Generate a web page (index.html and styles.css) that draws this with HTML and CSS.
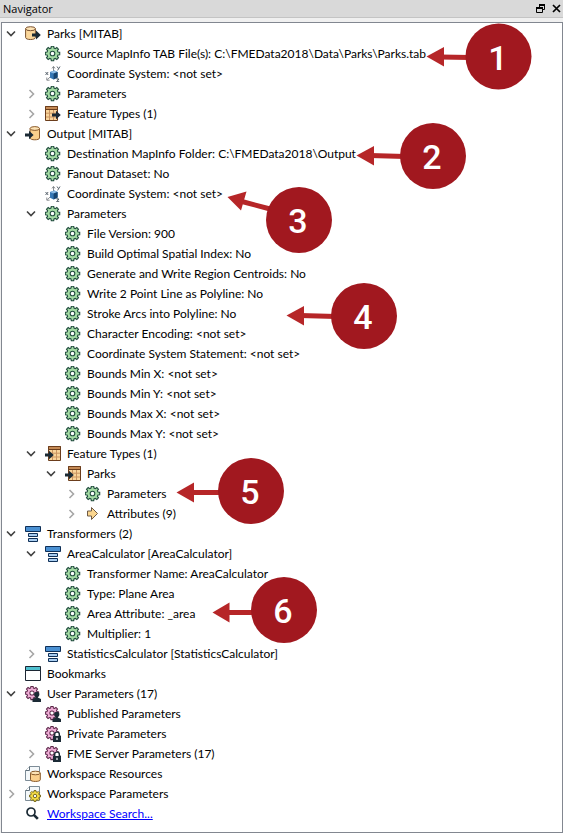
FILE: index.html
```html
<!DOCTYPE html>
<html lang="en">
<head>
<meta charset="utf-8">
<title>Navigator</title>
<link rel="stylesheet" href="styles.css">
</head>
<body>
<svg class="sprite" aria-hidden="true">
  <defs>
    <g id="cog">
      <path fill-rule="evenodd" d="M-1.5-5.4L-1.2-7.2H1.2L1.5-5.4L2.8-4.9L4.3-6L6-4.3L4.9-2.8L5.4-1.5L7.2-1.2V1.2L5.4 1.5L4.9 2.8L6 4.3L4.3 6L2.8 4.9L1.5 5.4L1.2 7.2H-1.2L-1.5 5.4L-2.8 4.9L-4.3 6L-6 4.3L-4.9 2.8L-5.4 1.5L-7.2 1.2V-1.2L-5.4-1.5L-4.9-2.8L-6-4.3L-4.3-6L-2.8-4.9ZM2.3 0A2.3 2.3 0 1 0-2.3 0A2.3 2.3 0 1 0 2.3 0Z"/>
    </g>
    <symbol id="gear" viewBox="0 0 16 16">
      <use href="#cog" transform="translate(7.5 7.5)" fill="#a4dba4" stroke="#1f4a3c" stroke-width="1.1"/>
    </symbol>
    <symbol id="down" viewBox="0 0 10 10"><path d="M1 2.500L5 6.500L9 2.500" fill="none" stroke="#404040" stroke-width="1.6"/></symbol>
    <symbol id="right" viewBox="0 0 10 10"><path d="M3.500 1L7.500 5L3.500 9" fill="none" stroke="#a6a6a6" stroke-width="1.6"/></symbol>
    <symbol id="reader" viewBox="0 0 16 16">
      <path d="M.6 2.5V11.5C.6 14.2 10.4 14.2 10.4 11.5V2.5" fill="#fbd79b" stroke="#7a5230"/>
      <ellipse cx="5.5" cy="2.7" rx="4.9" ry="2" fill="#fde3b5" stroke="#7a5230"/>
      <path d="M7 7.4H11V4.6L15.8 9L11 13.4V10.6H7Z" fill="#1b2a35"/>
    </symbol>
    <symbol id="writer" viewBox="0 0 16 16">
      <path d="M5.1 2.5V12C5.1 14.4 14.5 14.4 14.5 12V2.5" fill="#fbd08c" stroke="#8a5a2b"/>
      <ellipse cx="9.8" cy="2.5" rx="4.7" ry="1.9" fill="#fde3b5" stroke="#8a5a2b"/>
      <path d="M0 7.4H4V4.8L8.6 9L4 13.2V10.6H0Z" fill="#1b2a35"/>
    </symbol>
    <symbol id="axes" viewBox="0 0 16 16">
      <path d="M8.5 1V6M6 10L2.5 13.6M10 11L14 14" stroke="#8a8f94" fill="none"/>
      <path d="M7 2.4L8.5.4L10 2.4M1.8 11.5V14.2H4.6" fill="none" stroke="#6a6f74" stroke-width=".8"/>
      <path d="M5 6L9.5 4.4L12.6 6V11.5L8.6 13.6L5 11.8Z" fill="#3677b5"/>
      <path d="M5 6L9.5 4.4L12.6 6L8.6 7.4Z" fill="#8dbbe4"/>
      <path d="M8.6 7.4L12.6 6V11.5L8.6 13.6Z" fill="#16436f"/>
      <path d="M.5 6L3.2 9M3.2 6L.5 9M12 .5L13.4 2.5M15 .5L12.6 4.4M11.6 13H14L11.6 15.6H14.2" fill="none" stroke="#46525e" stroke-width=".9"/>
    </symbol>
    <symbol id="table-out" viewBox="0 0 16 16">
      <path d="M.5.5H12.5V14.5H.5Z" fill="#f9d49a" stroke="#6b3d1c"/>
      <path d="M1 7.2H12M1 11H12M4.5 4V14M8.5 4V14" stroke="#c99461"/>
      <path d="M.5.5H12.5V3.5H.5Z" fill="#c58a55" stroke="#6b3d1c"/>
      <path d="M7 7.4H11V4.8L15.8 9L11 13.2V10.6H7Z" fill="#1b2a35"/>
    </symbol>
    <symbol id="table-in" viewBox="0 0 16 16">
      <path d="M3.5.5H15.5V14.5H3.5Z" fill="#f9d49a" stroke="#6b3d1c"/>
      <path d="M4 7.2H15M4 11H15M7.5 4V14M11.5 4V14" stroke="#c99461"/>
      <path d="M3.5.5H15.5V3.5H3.5Z" fill="#c58a55" stroke="#6b3d1c"/>
      <path d="M0 7.4H4V4.8L8.8 9L4 13.2V10.6H0Z" fill="#1b2a35"/>
    </symbol>
    <symbol id="attribute" viewBox="0 0 16 16">
      <path d="M2.500 5H6.500V1.500L12.500 7.500L6.500 13.500V10H2.500Z" fill="#fbd68f" stroke="#6e5a45"/>
    </symbol>
    <symbol id="transformer" viewBox="0 0 16 16">
      <path d="M.5.5H15.5V5.5H.5Z" fill="#4a90d2" stroke="#0f2f57"/>
      <path d="M3.5 7.5H12.5V10.5H3.5ZM3.5 12.5H12.5V15.5H3.5Z" fill="#a9cdf0" stroke="#0f2f57"/>
    </symbol>
    <symbol id="bookmark" viewBox="0 0 16 16">
      <path d="M.5 1H15.5V14.5H.5Z" fill="#fff" stroke="#1c2633"/>
      <path d="M.5 .5H15.5V4.5H.5Z" fill="#4fc0cf" stroke="#1c2633"/>
    </symbol>
    <symbol id="gear-user" viewBox="0 0 16 16">
      <use href="#cog" transform="translate(7 7) scale(.92)" fill="#efadd6" stroke="#5b2648" stroke-width="1.1"/>
      <circle cx="11.7" cy="8.4" r="2.6" fill="#1b2a35"/>
      <path d="M10.6 10H12.8V11.5L16 13V16H7.5V13L10.6 11.5Z" fill="#1b2a35"/>
    </symbol>
    <symbol id="gear-lock" viewBox="0 0 16 16">
      <use href="#cog" transform="translate(7 7) scale(.92)" fill="#efadd6" stroke="#5b2648" stroke-width="1.1"/>
      <path d="M8 9.6H16V16H8Z" fill="#1b2a35"/>
      <path d="M9.7 10V8.2C9.7 5.4 14.3 5.4 14.3 8.2V10" fill="#fff" stroke="#1b2a35" stroke-width="1.4"/>
      <path d="M12 11.8V14" stroke="#fff" stroke-width="1.2"/>
    </symbol>
    <symbol id="resources" viewBox="0 0 16 16">
      <path d="M4.5.5H14.5V14.5H.5V4.5Z" fill="#f4f8fa" stroke="#7d8c97"/>
      <path d="M4.5.5V4.5H.5" fill="#fff" stroke="#61717d"/>
      <path d="M5.5 7V13.8C5.5 16 15.3 16 15.3 13.8V7" fill="#fbcf8c" stroke="#8a5a2b"/>
      <ellipse cx="10.4" cy="7" rx="4.9" ry="1.8" fill="#fde3b5" stroke="#8a5a2b"/>
    </symbol>
    <symbol id="settings" viewBox="0 0 16 16">
      <path d="M4.5.5H14.5V14.5H.5V4.5Z" fill="#f4f8fa" stroke="#7d8c97"/>
      <path d="M4.5.5V4.5H.5" fill="#fff" stroke="#61717d"/>
      <use href="#cog" transform="translate(10 10) scale(.76)" fill="#f5dc45" stroke="#6b5c12" stroke-width="1.2"/>
    </symbol>
    <symbol id="search" viewBox="0 0 16 16">
      <circle cx="6" cy="6" r="4" fill="none" stroke="#1b2a35" stroke-width="1.7"/>
      <path d="M8.800 8.800L12.800 12.800" stroke="#1b2a35" stroke-width="2.6"/>
    </symbol>
  </defs>
</svg>

<main class="panel">
  <header class="titlebar">
    <h1 class="title">Navigator</h1>
    <button class="tool" type="button" aria-label="Float panel">
      <svg class="tool-icon" viewBox="0 0 10 10"><path d="M3.500 3V1.500H8.500V5.500H7M.5 4.500H6.500V8.500H.5Z" fill="none" stroke="#000"/><path d="M3 1H9M0 4H7" stroke="#000" stroke-width="2"/></svg>
    </button>
    <button class="tool" type="button" aria-label="Close panel">
      <svg class="tool-icon" viewBox="0 0 10 10"><path d="M1 1L8 8M8 1L1 8" stroke="#000" stroke-width="1.700"/></svg>
    </button>
  </header>

  <section class="view">
    <ul class="tree">
      <li>
        <div class="row"><button class="toggle" type="button" aria-expanded="true" aria-label="Parks reader"><svg><use href="#down"/></svg></button><svg class="icon"><use href="#reader"/></svg><span>Parks [MITAB]</span></div>
        <ul>
          <li class="row leaf"><svg class="icon"><use href="#gear"/></svg><span>Source MapInfo TAB File(s): C:\FMEData2018\Data\Parks\Parks.tab</span></li>
          <li class="row leaf"><svg class="icon"><use href="#axes"/></svg><span>Coordinate System: &lt;not set&gt;</span></li>
          <li class="row"><button class="toggle" type="button" aria-expanded="false" aria-label="Parameters"><svg><use href="#right"/></svg></button><svg class="icon"><use href="#gear"/></svg><span>Parameters</span></li>
          <li class="row"><button class="toggle" type="button" aria-expanded="false" aria-label="Feature Types"><svg><use href="#right"/></svg></button><svg class="icon"><use href="#table-out"/></svg><span>Feature Types (1)</span></li>
        </ul>
      </li>
      <li>
        <div class="row"><button class="toggle" type="button" aria-expanded="true" aria-label="Output writer"><svg><use href="#down"/></svg></button><svg class="icon"><use href="#writer"/></svg><span>Output [MITAB]</span></div>
        <ul>
          <li class="row leaf"><svg class="icon"><use href="#gear"/></svg><span>Destination MapInfo Folder: C:\FMEData2018\Output</span></li>
          <li class="row leaf"><svg class="icon"><use href="#gear"/></svg><span>Fanout Dataset: No</span></li>
          <li class="row leaf"><svg class="icon"><use href="#axes"/></svg><span>Coordinate System: &lt;not set&gt;</span></li>
          <li>
            <div class="row"><button class="toggle" type="button" aria-expanded="true" aria-label="Parameters"><svg><use href="#down"/></svg></button><svg class="icon"><use href="#gear"/></svg><span>Parameters</span></div>
            <ul>
              <li class="row leaf"><svg class="icon"><use href="#gear"/></svg><span>File Version: 900</span></li>
              <li class="row leaf"><svg class="icon"><use href="#gear"/></svg><span>Build Optimal Spatial Index: No</span></li>
              <li class="row leaf"><svg class="icon"><use href="#gear"/></svg><span>Generate and Write Region Centroids: No</span></li>
              <li class="row leaf"><svg class="icon"><use href="#gear"/></svg><span>Write 2 Point Line as Polyline: No</span></li>
              <li class="row leaf"><svg class="icon"><use href="#gear"/></svg><span>Stroke Arcs into Polyline: No</span></li>
              <li class="row leaf"><svg class="icon"><use href="#gear"/></svg><span>Character Encoding: &lt;not set&gt;</span></li>
              <li class="row leaf"><svg class="icon"><use href="#gear"/></svg><span>Coordinate System Statement: &lt;not set&gt;</span></li>
              <li class="row leaf"><svg class="icon"><use href="#gear"/></svg><span>Bounds Min X: &lt;not set&gt;</span></li>
              <li class="row leaf"><svg class="icon"><use href="#gear"/></svg><span>Bounds Min Y: &lt;not set&gt;</span></li>
              <li class="row leaf"><svg class="icon"><use href="#gear"/></svg><span>Bounds Max X: &lt;not set&gt;</span></li>
              <li class="row leaf"><svg class="icon"><use href="#gear"/></svg><span>Bounds Max Y: &lt;not set&gt;</span></li>
            </ul>
          </li>
          <li>
            <div class="row"><button class="toggle" type="button" aria-expanded="true" aria-label="Feature Types"><svg><use href="#down"/></svg></button><svg class="icon"><use href="#table-in"/></svg><span>Feature Types (1)</span></div>
            <ul>
              <li>
                <div class="row"><button class="toggle" type="button" aria-expanded="true" aria-label="Parks"><svg><use href="#down"/></svg></button><svg class="icon"><use href="#table-in"/></svg><span>Parks</span></div>
                <ul>
                  <li class="row"><button class="toggle" type="button" aria-expanded="false" aria-label="Parameters"><svg><use href="#right"/></svg></button><svg class="icon"><use href="#gear"/></svg><span>Parameters</span></li>
                  <li class="row"><button class="toggle" type="button" aria-expanded="false" aria-label="Attributes"><svg><use href="#right"/></svg></button><svg class="icon"><use href="#attribute"/></svg><span>Attributes (9)</span></li>
                </ul>
              </li>
            </ul>
          </li>
        </ul>
      </li>
      <li>
        <div class="row"><button class="toggle" type="button" aria-expanded="true" aria-label="Transformers"><svg><use href="#down"/></svg></button><svg class="icon"><use href="#transformer"/></svg><span>Transformers (2)</span></div>
        <ul>
          <li>
            <div class="row"><button class="toggle" type="button" aria-expanded="true" aria-label="AreaCalculator"><svg><use href="#down"/></svg></button><svg class="icon"><use href="#transformer"/></svg><span>AreaCalculator [AreaCalculator]</span></div>
            <ul>
              <li class="row leaf"><svg class="icon"><use href="#gear"/></svg><span>Transformer Name: AreaCalculator</span></li>
              <li class="row leaf"><svg class="icon"><use href="#gear"/></svg><span>Type: Plane Area</span></li>
              <li class="row leaf"><svg class="icon"><use href="#gear"/></svg><span>Area Attribute: _area</span></li>
              <li class="row leaf"><svg class="icon"><use href="#gear"/></svg><span>Multiplier: 1</span></li>
            </ul>
          </li>
          <li class="row"><button class="toggle" type="button" aria-expanded="false" aria-label="StatisticsCalculator"><svg><use href="#right"/></svg></button><svg class="icon"><use href="#transformer"/></svg><span>StatisticsCalculator [StatisticsCalculator]</span></li>
        </ul>
      </li>
      <li class="row leaf"><svg class="icon"><use href="#bookmark"/></svg><span>Bookmarks</span></li>
      <li>
        <div class="row"><button class="toggle" type="button" aria-expanded="true" aria-label="User Parameters"><svg><use href="#down"/></svg></button><svg class="icon"><use href="#gear-user"/></svg><span>User Parameters (17)</span></div>
        <ul>
          <li class="row leaf"><svg class="icon"><use href="#gear-user"/></svg><span>Published Parameters</span></li>
          <li class="row leaf"><svg class="icon"><use href="#gear-lock"/></svg><span>Private Parameters</span></li>
          <li class="row"><button class="toggle" type="button" aria-expanded="false" aria-label="FME Server Parameters"><svg><use href="#right"/></svg></button><svg class="icon"><use href="#gear-lock"/></svg><span>FME Server Parameters (17)</span></li>
        </ul>
      </li>
      <li class="row leaf"><svg class="icon"><use href="#resources"/></svg><span>Workspace Resources</span></li>
      <li class="row"><button class="toggle" type="button" aria-expanded="false" aria-label="Workspace Parameters"><svg><use href="#right"/></svg></button><svg class="icon"><use href="#settings"/></svg><span>Workspace Parameters</span></li>
      <li class="row leaf"><svg class="icon"><use href="#search"/></svg><a href="#search">Workspace Search...</a></li>
    </ul>
  </section>

  <svg class="callouts" width="563" height="833" viewBox="0 0 563 833">
    <g class="arrow">
      <path d="M440 57L470 57.500"/><path d="M370 155.500L405 156.500"/><path d="M240 201L272 209.500"/>
      <path d="M300 315.500L336 316.500"/><path d="M190 492.500H224"/><path d="M226 612.500H256"/>
    </g>
    <g class="head">
      <path d="M426.500 56.500L444 47V66.500Z"/><path d="M356.500 155.500L374 146V165.500Z"/><path d="M227.500 197L246.500 191.500L241 210.500Z"/>
      <path d="M286.500 315.500L304 306V325.500Z"/><path d="M176.500 492.500L194 482.500V502.500Z"/><path d="M212.500 612.500L229.500 602.500V622.500Z"/>
    </g>
    <g class="disc">
      <circle cx="498.500" cy="56.500" r="33"/><circle cx="433" cy="156" r="33"/><circle cx="299" cy="220" r="33"/>
      <circle cx="364" cy="316" r="33"/><circle cx="251" cy="491" r="33"/><circle cx="284" cy="610" r="33"/>
    </g>
    <g class="number">
      <text x="498" y="70">1</text><text x="432" y="169">2</text><text x="298" y="233">3</text>
      <text x="363" y="329">4</text><text x="250" y="504">5</text><text x="283" y="623">6</text>
    </g>
  </svg>
</main>
</body>
</html>
```
FILE: styles.css
```css
* {
  box-sizing: border-box;
}

body {
  margin: 0;
  background: #f0f0f0;
  color: #000;
  font: 12px/20px "Segoe UI", Lato, "Noto Sans", sans-serif;
}

.sprite {
  position: absolute;
  width: 0;
  height: 0;
}

.panel {
  position: relative;
  display: flex;
  flex-direction: column;
  min-height: 100vh;
}

.titlebar {
  display: flex;
  align-items: center;
  gap: 6px;
  height: 18px;
  margin-bottom: 4px;
  padding: 0 1px 0 3px;
  background: #d9d9d9;
  border-bottom: 1px solid #c4c4c4;
}

.title {
  flex: 1;
  margin: 0;
  font: 11px/20px "Segoe UI", "Open Sans", "Noto Sans", sans-serif;
}

.tool,
.toggle {
  display: grid;
  place-items: center;
  padding: 0;
  border: 0;
  background: none;
}

.tool-icon {
  display: block;
  width: 10px;
  height: 10px;
}

.view {
  flex: 1;
  margin-left: 1px;
  padding-top: 1px;
  background: #fff;
  border: 1px solid #828790;
}

.tree,
.tree ul {
  margin: 0;
  padding: 0;
  list-style: none;
}

.tree ul {
  padding-left: 20px;
}

.row {
  display: flex;
  align-items: center;
  height: 20px;
  white-space: nowrap;
}

.leaf {
  padding-left: 18px;
}

.toggle {
  width: 18px;
  height: 20px;
}

.toggle svg {
  width: 10px;
  height: 10px;
}

.icon {
  flex: none;
  width: 16px;
  height: 16px;
  margin: 0 6px 0 5px;
}

a {
  color: #00f;
}

.callouts {
  position: absolute;
  top: 0;
  left: 0;
  pointer-events: none;
}

.arrow {
  stroke: #b62628;
  stroke-width: 5px;
}

.head {
  fill: #b62628;
}

.disc {
  fill: #a1181f;
}

.number {
  fill: #fff;
  font: 500 34px Roboto, "Liberation Sans", sans-serif;
  text-anchor: middle;
}
```
